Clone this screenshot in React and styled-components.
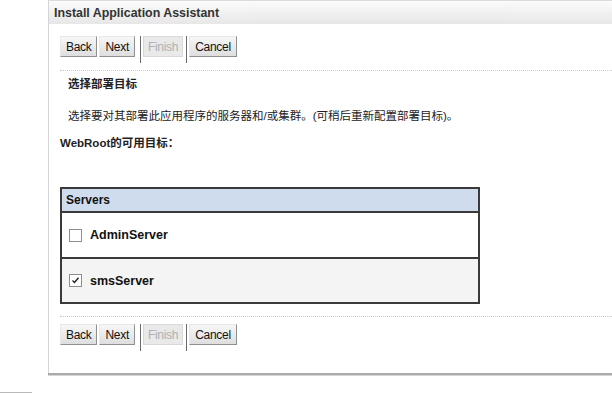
import React from 'react';
import styled, { createGlobalStyle, css } from 'styled-components';

const GlobalStyle = createGlobalStyle`
  html, body {
    margin: 0;
    padding: 0;
    background: #fff;
    overflow: hidden;
  }
  body {
    font-family: "Liberation Sans", Arial, "Noto Sans CJK SC", sans-serif;
    font-size: 12px;
    color: #222;
  }
`;

const Page = styled.div`
  width: 612px;
  height: 393px;
  display: flex;
  flex-direction: column;
`;

const Panel = styled.div`
  margin-left: 48px;
  height: 373px;
  border-left: 1px solid #d3d6d8;
  box-shadow: 0 2px 0 #a8aba8, 0 3px 0 #d6d6d6;
  display: flex;
  flex-direction: column;
`;

const Header = styled.div`
  height: 24px;
  display: flex;
  align-items: center;
  padding-left: 5px;
  border-top: 1px solid #dcdcdc;
  box-sizing: border-box;
  background: linear-gradient(#fbfbfb, #e7e7e7);
  font-weight: bold;
  color: #333;
  font-size: 12.4px;
`;

const Body = styled.div`
  padding-left: 11px;
  display: flex;
  flex-direction: column;
`;

const ButtonBar = styled.div`
  display: flex;
  align-items: flex-start;
  gap: 2px;
  margin-top: ${(p) => p.top}px;
  height: 27px;
`;

const Button = styled.div`
  height: 21px;
  box-sizing: border-box;
  padding: 0 5px;
  display: flex;
  align-items: center;
  border: 1px solid;
  border-color: #e8e8e8 #8f8f8f #8f8f8f #e8e8e8;
  background: linear-gradient(#f7f7f7, #dedede);
  color: #111;
  font-size: 12px;
  letter-spacing: -0.3px;
  ${(p) =>
    p.disabled &&
    css`
      padding: 0 4px;
      color: #b0b0b0;
      background: #e9e9e9;
      border-color: #d8d8d8;
    `}
`;

const Separator = styled.div`
  width: 1px;
  height: 27px;
  background: #6a6a6a;
  margin-left: ${(p) => p.left}px;
`;

const DottedRule = styled.div`
  border-top: 1px dotted #c8c8c8;
  margin-top: ${(p) => p.top}px;
`;

const Heading = styled.div`
  font-weight: bold;
  line-height: 16px;
  margin: ${(p) => p.top}px 0 0 ${(p) => p.indent}px;
  font-size: 11.5px;
`;

const Text = styled.div`
  line-height: 16px;
  margin: 16px 0 0 8px;
  font-size: 11.5px;
`;

const Table = styled.div`
  width: 420px;
  box-sizing: border-box;
  margin-top: 36px;
  border: 2px solid #3a3a3a;
  display: flex;
  flex-direction: column;
`;

const TableHead = styled.div`
  height: 22px;
  display: flex;
  align-items: center;
  padding-left: 4px;
  background: #cfdcee;
  font-weight: bold;
  font-size: 12px;
  color: #111;
`;

const Row = styled.div`
  height: ${(p) => p.h}px;
  box-sizing: border-box;
  border-top: 2px solid #3a3a3a;
  display: flex;
  align-items: center;
  padding-left: 7px;
  gap: 8px;
  background: ${(p) => (p.alt ? '#f4f4f4' : '#fff')};
  font-weight: bold;
  font-size: 12.5px;
  color: #111;
`;

const Box = styled.span`
  width: 13px;
  height: 13px;
  box-sizing: border-box;
  border: 1px solid #8e8e8e;
  background: #fff;
  display: inline-flex;
  align-items: center;
  justify-content: center;
`;

const FooterRule = styled.div`
  margin-top: 19px;
  width: 32px;
  height: 1px;
  background: #b9b9b9;
`;

const Checkbox = ({ checked }) => (
  <Box>
    {checked && (
      <svg width="9" height="9" viewBox="0 0 9 9">
        <path d="M1.5 4.5 L3.5 6.5 L7.5 1.8" fill="none" stroke="#222" strokeWidth="1.4" />
      </svg>
    )}
  </Box>
);

const Buttons = ({ top }) => (
  <ButtonBar top={top}>
    <Button>Back</Button>
    <Button>Next</Button>
    <Separator left={3} />
    <Button disabled>Finish</Button>
    <Separator left={1} />
    <Button>Cancel</Button>
  </ButtonBar>
);

export default function App() {
  return (
    <Page>
      <GlobalStyle />
      <Panel>
        <Header>Install Application Assistant</Header>
        <Body>
          <Buttons top={12} />
          <DottedRule top={7} />
          <Heading top={5} indent={8}>选择部署目标</Heading>
          <Text>选择要对其部署此应用程序的服务器和/或集群。(可稍后重新配置部署目标)。</Text>
          <Heading top={11} indent={0}>WebRoot的可用目标：</Heading>
          <Table>
            <TableHead>Servers</TableHead>
            <Row h={46}>
              <Checkbox />
              AdminServer
            </Row>
            <Row h={45} alt>
              <Checkbox checked />
              smsServer
            </Row>
          </Table>
          <DottedRule top={12} />
          <Buttons top={7} />
        </Body>
      </Panel>
      <FooterRule />
    </Page>
  );
}
